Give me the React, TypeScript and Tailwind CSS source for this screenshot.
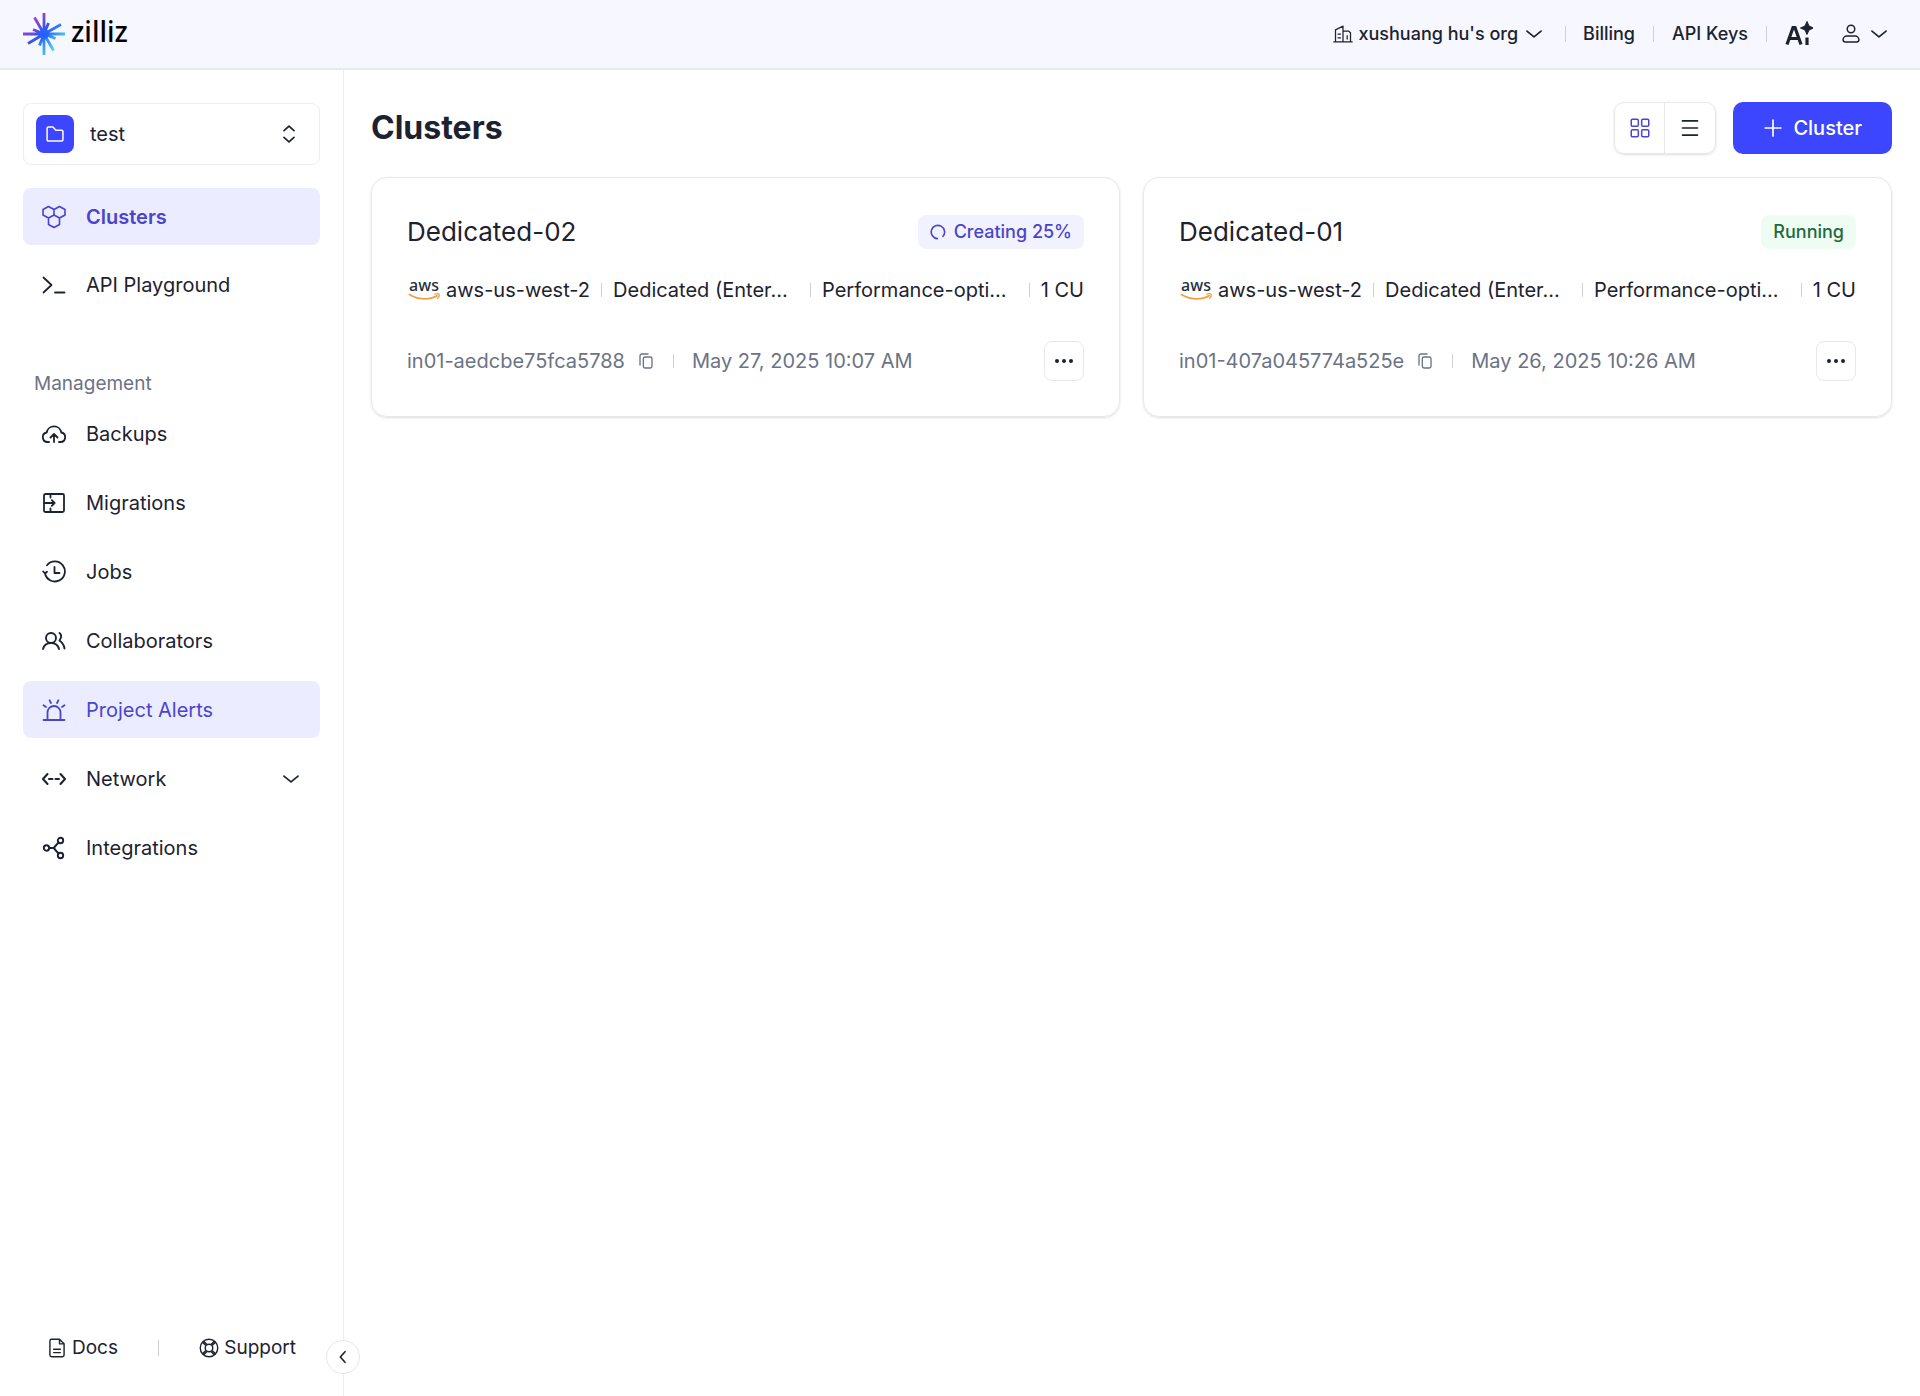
import type { ReactNode } from "react"

const ORG = "xushuang hu's org"

type IconProps = { className?: string }

function Icon({ className = "size-6", children, width = 1.5 }: IconProps & { children: ReactNode; width?: number }) {
  return (
    <svg
      viewBox="0 0 24 24"
      fill="none"
      stroke="currentColor"
      strokeWidth={width}
      strokeLinecap="round"
      strokeLinejoin="round"
      aria-hidden="true"
      className={`shrink-0 ${className}`}
    >
      {children}
    </svg>
  )
}

const ChevronDown = ({ className = "size-5" }: IconProps) => (
  <Icon className={className} width={2}>
    <path d="M3.500 8.500l8.500 7 8.500-7" />
  </Icon>
)

const ClustersIcon = () => (
  <Icon width={1.6}>
    <path d="M6.500 1.500L12 4.500v5.500l-5.500 3L1 10V4.500zM17.500 1.500L23 4.500v5.500l-5.500 3L12 10V4.500zM17.500 13v6.500l-5.500 3-5.500-3V13" />
  </Icon>
)

const PlaygroundIcon = () => (
  <Icon width={1.8}>
    <path d="M1.500 4.500l8 7.500-8 7.500M13 19.500h9.500" />
  </Icon>
)

const BackupsIcon = () => (
  <Icon width={1.8}>
    <path d="M7 20H5.500A4.800 4.800 0 0 1 4.700 10.500a7.400 7.400 0 0 1 14.600 0A4.800 4.800 0 0 1 18.500 20H17M12 20v-7.500M8.500 15.500l3.500-3.500 3.500 3.500" />
  </Icon>
)

const MigrationsIcon = () => (
  <Icon width={1.8}>
    <path d="M3.500 3h17a1.500 1.500 0 0 1 1.500 1.500v15a1.500 1.500 0 0 1-1.500 1.500h-17A1.500 1.500 0 0 1 2 19.500v-15A1.500 1.500 0 0 1 3.500 3zM2 12h10.500M9.800 9.200l2.800 2.800-2.800 2.800M8.500 3v3.500M8.500 21v-3.500" />
  </Icon>
)

const JobsIcon = () => (
  <Icon width={1.8}>
    <path d="M5 5.300a10 10 0 1 1-2 7.700M1.200 11.500L3 13.500l2-1.700M12.500 7v6h5" />
  </Icon>
)

const CollaboratorsIcon = () => (
  <Icon width={1.9}>
    <circle cx="9" cy="9" r="5" />
    <path d="M1 20c1-4 4-6 8-6s7 2 8 6M17.500 4c2 1.500 2 4.500 0 7.500 3 2 4.500 4.500 5 8" />
  </Icon>
)

const AlertsIcon = () => (
  <Icon width={1.8}>
    <path d="M1.500 22h21M5.500 22v-7.500a6.500 6.500 0 0 1 13 0V22M9 5L7.600 2.300M15 5l1.400-2.700M4 9L1.500 7.300M20 9l2.500-1.700" />
  </Icon>
)

const NetworkIcon = () => (
  <Icon width={2}>
    <path d="M5.500 7L1 12l4.500 5M18.500 7l4.500 5-4.500 5M7 12h3.500M13.500 12H17" />
  </Icon>
)

const IntegrationsIcon = () => (
  <Icon width={1.9}>
    <circle cx="4.500" cy="12" r="2.700" />
    <circle cx="18.500" cy="4.500" r="2.700" />
    <circle cx="18.500" cy="19.500" r="2.700" />
    <path d="M7.200 12H12M16.500 6.500L12.500 11v2l4 4.500" />
  </Icon>
)

const GridIcon = () => (
  <Icon className="size-5" width={1.8}>
    <rect x="1.500" y="1.500" width="8.500" height="8.500" rx="1.500" />
    <rect x="14" y="1.500" width="8.500" height="8.500" rx="1.500" />
    <rect x="1.500" y="14" width="8.500" height="8.500" rx="1.500" />
    <rect x="14" y="14" width="8.500" height="8.500" rx="1.500" />
  </Icon>
)

const ListIcon = () => (
  <Icon className="size-5" width={2}>
    <path d="M3 3.500h18M3 12h18M3 20.500h18" />
  </Icon>
)

const CopyIcon = () => (
  <Icon className="size-4" width={2}>
    <rect x="8" y="6" width="13" height="16.500" rx="2.500" />
    <path d="M3 18V4.500A3 3 0 0 1 6 1.500h9" />
  </Icon>
)

function Logo() {
  return (
    <a href="#" className="flex items-center gap-[5px] text-black">
      <svg viewBox="0 0 44 44" fill="none" strokeWidth="2.800" className="size-11 shrink-0" aria-hidden="true">
        <defs>
          <linearGradient id="ray" gradientUnits="userSpaceOnUse" x1="9" y1="9" x2="35" y2="35">
            <stop offset="0" stopColor="#a043c8" />
            <stop offset="0.450" stopColor="#2f55f5" />
            <stop offset="0.600" stopColor="#2f7af5" />
            <stop offset="1" stopColor="#4fd8f0" />
          </linearGradient>
        </defs>
        <path
          stroke="url(#ray)"
          d="M22 22V1M22 22l-9.500-16.500M22 22l4.500-11M22 22l17-9.500M22 22L11 17.500M22 22l-16 9.500M22 22l-4.500 11.500M22 22l9.500 16.500M22 22l11.500 4.500M22 22v21M1 22h42"
        />
        <circle cx="22" cy="22" r="5" fill="#2563ff" />
      </svg>
      <span className="pb-1.5 font-['Noto_Sans'] text-[28px] leading-8 font-medium">zilliz</span>
    </a>
  )
}

function Divider({ className = "h-3.5" }: IconProps) {
  return <span className={`w-px shrink-0 bg-[#cdd0d9] ${className}`} />
}

function Header() {
  return (
    <header className="flex h-[70px] shrink-0 items-center justify-between border-b-2 border-[#e8eaf1] bg-[#f6f7ff] pr-[31px] pl-[22px]">
      <Logo />
      <div className="flex items-center text-lg font-medium">
        <button className="flex items-center gap-[5px]">
          <Icon className="size-5" width={1.5}>
            <path d="M1 21.500h22M3 21.500V7l9-4.500v19M12 8.500h6.500l2.500 2v11M6 12h3M6 16.500h3M17 14v4" />
          </Icon>
          {ORG}
          <ChevronDown className="ml-px size-5" />
        </button>
        <Divider className="mr-[17px] ml-[21px] h-4" />
        <a href="#">Billing</a>
        <Divider className="mx-[18px] h-4" />
        <a href="#">API Keys</a>
        <Divider className="mx-[18px] h-4" />
        <button aria-label="AI assistant">
          <svg viewBox="0 0 28 26" className="h-[26px] w-7" aria-hidden="true">
            <path d="M2 23.500L8 6.500h2l6 17M4.500 17.500h9" fill="none" stroke="currentColor" strokeWidth="3.200" />
            <path d="M22 .5l2 4.500 4.500 2-4.500 2-2 4.500-2-4.500-4.500-2 4.500-2z" fill="currentColor" stroke="currentColor" />
            <path d="M22 16.500v7.500" stroke="currentColor" strokeWidth="3.200" />
          </svg>
        </button>
        <button className="ml-7 flex items-center gap-2" aria-label="Account">
          <Icon className="size-5" width={1.8}>
            <circle cx="12" cy="6" r="4.500" />
            <path d="M7 14.500h10c2.500 0 4.500 2 4.500 4.500 0 1.800-1 2.500-2.500 2.500H5c-1.500 0-2.500-.7-2.500-2.500 0-2.500 2-4.500 4.500-4.500z" />
          </Icon>
          <ChevronDown />
        </button>
      </div>
    </header>
  )
}

function NavItem({
  icon,
  label,
  className = "",
  chevron = false,
}: {
  icon: ReactNode
  label: string
  className?: string
  chevron?: boolean
}) {
  return (
    <a href="#" className={`flex h-[57px] items-center gap-5 rounded-lg px-[19px] text-xl ${className}`}>
      {icon}
      <span className="flex-1">{label}</span>
      {chevron && <ChevronDown />}
    </a>
  )
}

function Sidebar() {
  return (
    <aside className="relative flex w-[344px] shrink-0 flex-col border-r border-[#eceef2] px-[23px] pt-[33px] pb-[34px]">
      <button className="flex h-[62px] items-center gap-4 rounded-lg border border-[#eceef2] pr-5 pl-3 text-xl">
        <span className="flex size-[38px] items-center justify-center rounded-lg bg-[#3d46ff] text-white">
          <Icon className="size-5" width={1.8}>
            <path d="M2.500 19V5A1.500 1.500 0 0 1 4 3.500h5.500L13 7.500h7A1.500 1.500 0 0 1 21.500 9v10a1.500 1.500 0 0 1-1.500 1.500H4A1.500 1.500 0 0 1 2.500 19z" />
          </Icon>
        </span>
        <span className="flex-1 text-left">test</span>
        <Icon className="size-5" width={2}>
          <path d="M6 8l6-5.500L18 8M6 16l6 5.500 6-5.500" />
        </Icon>
      </button>

      <nav className="mt-[23px] flex flex-col gap-[11px]">
        <NavItem icon={<ClustersIcon />} label="Clusters" className="bg-[#ebecff] font-semibold text-[#4845cc]" />
        <NavItem icon={<PlaygroundIcon />} label="API Playground" />
      </nav>

      <h2 className="mt-[57px] px-[11px] text-[19px] leading-7 text-[#6b7385]">Management</h2>
      <nav className="mt-[7px] flex flex-col gap-3">
        <NavItem icon={<BackupsIcon />} label="Backups" />
        <NavItem icon={<MigrationsIcon />} label="Migrations" />
        <NavItem icon={<JobsIcon />} label="Jobs" />
        <NavItem icon={<CollaboratorsIcon />} label="Collaborators" />
        <NavItem icon={<AlertsIcon />} label="Project Alerts" className="bg-[#ebecff] text-[#4845cc]" />
        <NavItem icon={<NetworkIcon />} label="Network" chevron />
        <NavItem icon={<IntegrationsIcon />} label="Integrations" />
      </nav>

      <div className="mt-auto flex items-center justify-between px-6 text-[19px] leading-7">
        <a href="#" className="flex items-center gap-[5px]">
          <Icon className="size-5" width={1.7}>
            <path d="M3.500 3.500A2 2 0 0 1 5.500 1.500H15l5.500 5.500v13.500a2 2 0 0 1-2 2h-13a2 2 0 0 1-2-2zM15 1.500V7h5.500M8 13.500h8M8 17.500h8" />
          </Icon>
          Docs
        </a>
        <Divider className="h-4" />
        <a href="#" className="flex items-center gap-[5px]">
          <Icon className="size-5" width={1.7}>
            <circle cx="12" cy="12" r="10.500" />
            <circle cx="12" cy="12" r="4.500" />
            <path d="M4.600 5.500l3 3M6 4.100l3 3M18 4.100l-3 3M19.400 5.500l-3 3M4.600 18.500l3-3M6 19.900l3-3M18 19.900l-3-3M19.400 18.500l-3-3" />
          </Icon>
          Support
        </a>
      </div>

      <button
        aria-label="Collapse sidebar"
        className="absolute -right-[17px] bottom-[22px] flex size-[34px] items-center justify-center rounded-full border border-[#e5e7ec] bg-white"
      >
        <Icon className="size-4" width={2.4}>
          <path d="M15 4l-7 8 7 8" />
        </Icon>
      </button>
    </aside>
  )
}

type Cluster = {
  name: string
  id: string
  region: string
  plan: string
  type: string
  size: string
  created: string
  status: "creating" | "running"
}

const clusters: Cluster[] = [
  {
    name: "Dedicated-02",
    id: "in01-aedcbe75fca5788",
    region: "aws-us-west-2",
    plan: "Dedicated (Enter...",
    type: "Performance-opti...",
    size: "1 CU",
    created: "May 27, 2025 10:07 AM",
    status: "creating",
  },
  {
    name: "Dedicated-01",
    id: "in01-407a045774a525e",
    region: "aws-us-west-2",
    plan: "Dedicated (Enter...",
    type: "Performance-opti...",
    size: "1 CU",
    created: "May 26, 2025 10:26 AM",
    status: "running",
  },
]

function AwsLogo() {
  return (
    <svg viewBox="0 0 34 24" className="h-6 w-[34px] shrink-0 overflow-visible" aria-hidden="true">
      <text x="17" y="13" textAnchor="middle" fontSize="16" fontWeight="500" fill="#252f3e" className="font-['Noto_Sans']">
        aws
      </text>
      <path d="M2.500 16.500c8.500 5.500 20 5.500 27.500 1.200" fill="none" stroke="#f0a040" strokeWidth="1.800" strokeLinecap="round" />
      <path d="M28 16.200c1.500-.6 3.500-.6 4 0 .4.700-.2 2.800-1.300 4" fill="none" stroke="#f0a040" strokeWidth="1.300" strokeLinecap="round" />
    </svg>
  )
}

function StatusBadge({ status }: { status: Cluster["status"] }) {
  if (status === "creating") {
    return (
      <span className="flex h-[34px] items-center gap-2 rounded-lg bg-[#f2f2ff] px-3 text-lg font-medium text-[#4845cc]">
        <Icon className="size-4" width={2.4}>
          <path d="M11 22a10 10 0 1 1 8.500-3.500" />
        </Icon>
        Creating 25%
      </span>
    )
  }
  return (
    <span className="flex h-[34px] items-center rounded-lg bg-[#effcf4] px-3 text-lg font-medium text-[#1f6a3d]">
      Running
    </span>
  )
}

function ClusterCard({ cluster }: { cluster: Cluster }) {
  return (
    <article className="min-w-0 rounded-2xl border border-[#e6e8eb] px-[35px] pt-[37px] pb-[35px] shadow-sm">
      <div className="flex items-center justify-between">
        <h2 className="text-[26px] leading-[34px]">{cluster.name}</h2>
        <StatusBadge status={cluster.status} />
      </div>

      <div className="mt-[27px] flex items-center gap-[11px] text-xl">
        <div className="flex shrink-0 items-center gap-[5px]">
          <AwsLogo />
          {cluster.region}
        </div>
        <Divider />
        <span className="w-[186px] whitespace-nowrap">{cluster.plan}</span>
        <Divider />
        <span className="min-w-0 flex-1 whitespace-nowrap">{cluster.type}</span>
        <Divider />
        <span className="shrink-0">{cluster.size}</span>
      </div>

      <div className="mt-[37px] flex items-center text-xl text-[#6b7385]">
        <span>{cluster.id}</span>
        <button className="ml-[13px]" aria-label="Copy cluster ID">
          <CopyIcon />
        </button>
        <Divider className="mr-[18px] ml-[19px] h-3.5" />
        <span>{cluster.created}</span>
        <button
          aria-label="More actions"
          className="ml-auto flex size-10 items-center justify-center gap-[3px] rounded-lg border border-[#e6e8eb] text-[#1d2230]"
        >
          <span className="size-1 rounded-full bg-current" />
          <span className="size-1 rounded-full bg-current" />
          <span className="size-1 rounded-full bg-current" />
        </button>
      </div>
    </article>
  )
}

export default function App() {
  return (
    <div className="flex min-h-screen flex-col bg-white font-['Inter',sans-serif] text-[#1d2230]">
      <Header />
      <div className="flex flex-1">
        <Sidebar />
        <main className="min-w-0 flex-1 pt-8 pr-7 pl-[27px]">
          <div className="flex items-center justify-between">
            <h1 className="text-[32px] leading-10 font-bold">Clusters</h1>
            <div className="flex items-center gap-[17px]">
              <div className="flex h-[52px] rounded-[10px] border border-[#e6e8eb] shadow-sm">
                <button aria-label="Grid view" className="flex w-[50px] items-center justify-center border-r border-[#e6e8eb] text-[#4845cc]">
                  <GridIcon />
                </button>
                <button aria-label="List view" className="flex w-[50px] items-center justify-center">
                  <ListIcon />
                </button>
              </div>
              <button className="flex h-[52px] items-center gap-2.5 rounded-[10px] bg-[#3d46ff] px-[30px] text-xl font-medium text-white">
                <Icon className="size-5" width={2}>
                  <path d="M12 2.500v19M2.500 12h19" />
                </Icon>
                Cluster
              </button>
            </div>
          </div>

          <section className="mt-[23px] grid grid-cols-2 gap-[23px]">
            {clusters.map((cluster) => (
              <ClusterCard key={cluster.id} cluster={cluster} />
            ))}
          </section>
        </main>
      </div>
    </div>
  )
}
